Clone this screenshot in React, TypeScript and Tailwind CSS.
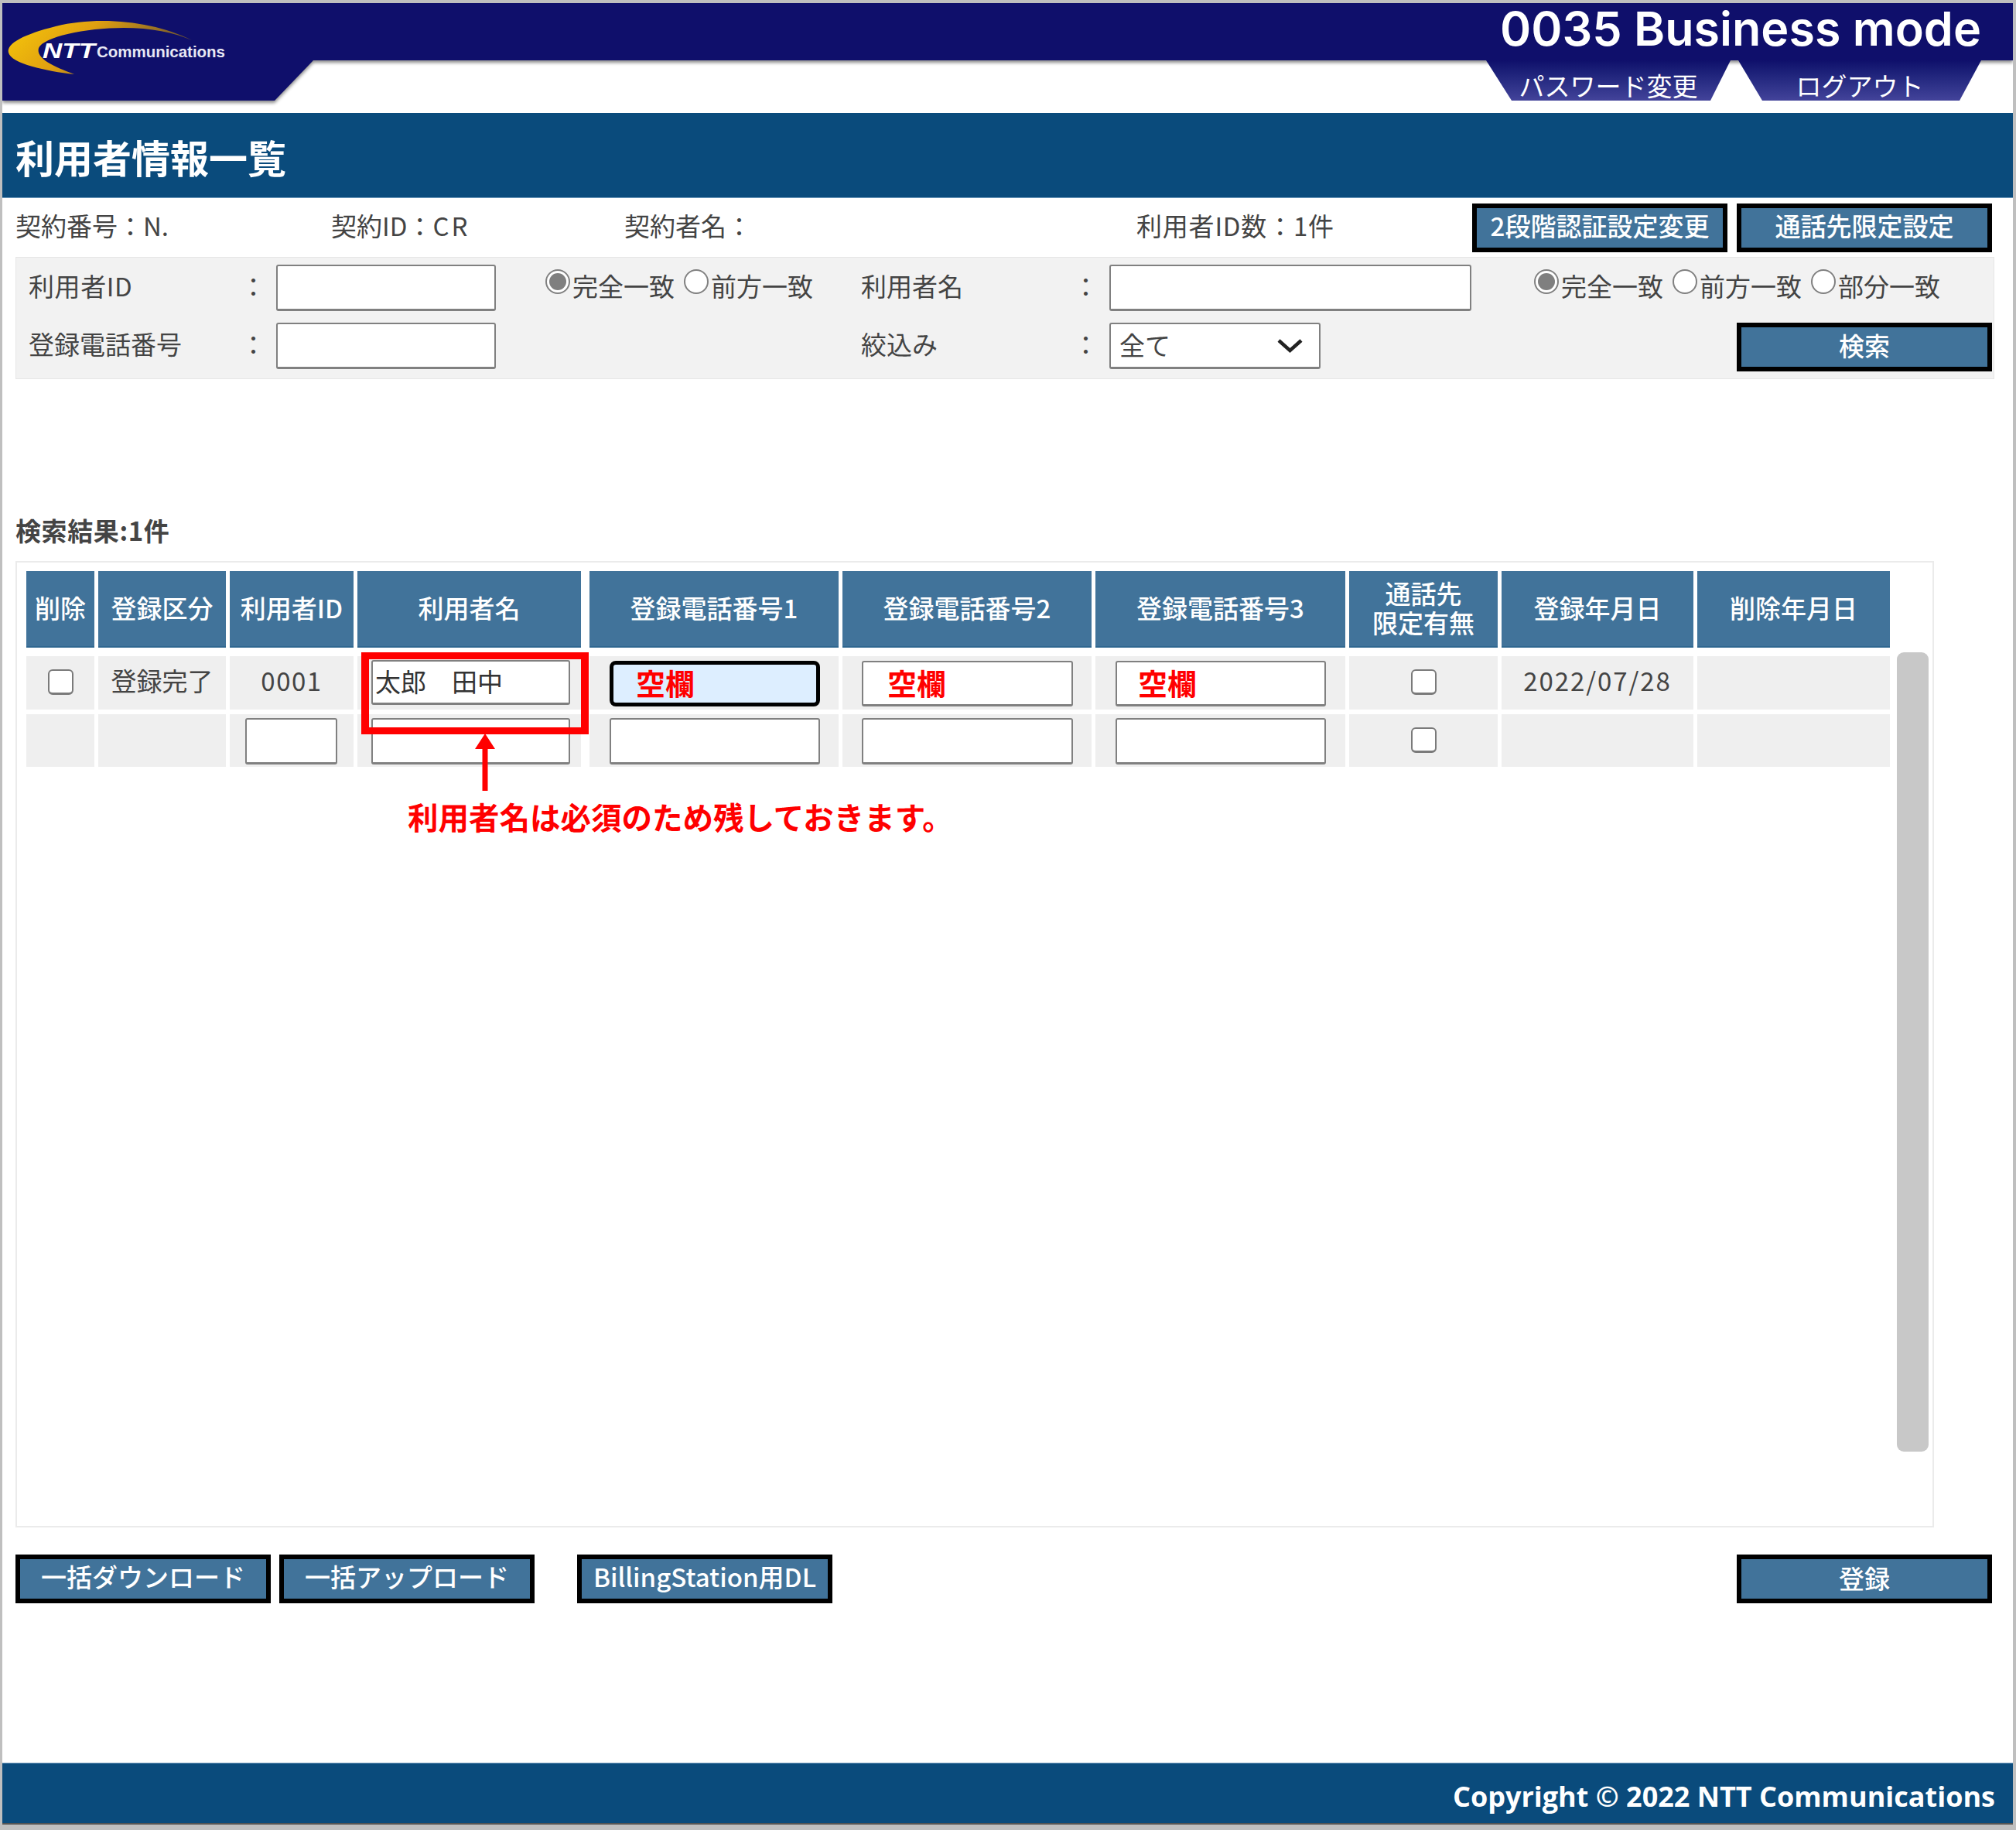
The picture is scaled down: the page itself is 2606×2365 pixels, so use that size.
import React from "react";

const cols = "grid grid-cols-[88px_165px_160px_289px_328px_322px_323px_192px_248px_249px] gap-x-[5px]";

function Btn({ w, children, cls = "pb-[5px]" }: { w: string; children: React.ReactNode; cls?: string }) {
  return (
    <button className={`${w} h-[63px] shrink-0 border-[6px] border-black bg-[#41739a] text-white text-[33px] leading-none font-medium flex items-center justify-center whitespace-nowrap ${cls}`}>
      {children}
    </button>
  );
}

function Radio({ label, checked = false }: { label: string; checked?: boolean }) {
  return (
    <span className="flex items-start mr-[12px]">
      <span className="mt-[6px] w-[32px] h-[32px] rounded-full border-2 border-[#808080] bg-white flex items-center justify-center shrink-0">
        {checked && <span className="w-[22px] h-[22px] rounded-full bg-[#7f7f7f] block" />}
      </span>
      <span className="ml-[3px] mt-[9px] text-[33px] leading-[36px] whitespace-nowrap">{label}</span>
    </span>
  );
}

function Box({ w, h, ml = "", mt = "", children }: { w: string; h: string; ml?: string; mt?: string; children?: React.ReactNode }) {
  return (
    <div className={`${w} ${h} ${ml} ${mt} shrink-0 bg-white border-2 border-b-[3px] border-[#808080] rounded-[3px] flex items-center overflow-hidden`}>
      {children}
    </div>
  );
}

function Blank({ children }: { children: React.ReactNode }) {
  return <span className="text-[#ff0000] font-bold text-[38px] leading-none whitespace-nowrap -mt-[3px] block">{children}</span>;
}

function Check() {
  return <span className="block w-[33px] h-[33px] bg-white border-2 border-b-[3px] border-[#7a7a7a] rounded-[6px] -mt-[2px]" />;
}

function Head({ children, cls = "" }: { children: React.ReactNode; cls?: string }) {
  return (
    <div className={`h-[99px] bg-[#41739a] border-b-2 border-[#2f6790] pb-[3px] text-white text-[33px] leading-[38px] font-medium flex items-center justify-center text-center whitespace-nowrap overflow-hidden ${cls}`}>
      {children}
    </div>
  );
}

function Cell({ children, h, cls = "" }: { children?: React.ReactNode; h: string; cls?: string }) {
  return <div className={`${h} bg-[#efefef] flex ${cls}`}>{children}</div>;
}

export default function App() {
  return (
    <div className="w-[2606px] h-[2365px] bg-white border-l-[3px] border-r-[4px] border-t-[4px] border-b-[7px] border-[#bfbfbf] flex flex-col text-[#444444] [font-family:'Noto_Sans_CJK_JP','Noto_Sans',sans-serif] overflow-hidden">
      {/* header */}
      <header className="relative h-[142px] shrink-0">
        <div className="absolute inset-0 [filter:drop-shadow(0_3px_2px_#8a8a8a)]">
          <div className="h-[126px] bg-[#0f0f6b] [clip-path:polygon(0_0,100%_0,100%_74px,402px_74px,352px_126px,0_126px)]" />
        </div>
        <svg className="absolute left-0 top-0" width="300" height="100" viewBox="3 4 300 100">
          <defs>
            <linearGradient id="g" x1="0" y1="0" x2="1" y2="0.3">
              <stop offset="0" stopColor="#f7c90a" />
              <stop offset="0.45" stopColor="#e0a010" />
              <stop offset="1" stopColor="#6b5230" />
            </linearGradient>
          </defs>
          <path d="M248 52 C200 28 130 20 72 34 C32 44 8 56 11 68 C14 82 60 92 96 96 C70 86 46 76 50 62 C56 48 110 36 160 36 C195 36 225 42 248 52 Z" fill="url(#g)" />
          <text x="55" y="75" fill="#fff" fontFamily="'Liberation Sans',sans-serif" fontWeight="700" fontStyle="italic" fontSize="27" textLength="68" lengthAdjust="spacingAndGlyphs">NTT</text>
          <text x="125" y="74" fill="#e8e8f4" fontFamily="'Liberation Sans',sans-serif" fontWeight="700" fontSize="21" textLength="166" lengthAdjust="spacingAndGlyphs">Communications</text>
        </svg>
        <div className="relative flex justify-end pr-[41px] h-[74px]">
          <span className="text-white text-[61px] leading-[74px] font-semibold font-['Inter',sans-serif] whitespace-nowrap -mt-[4px]">0035 Business mode</span>
        </div>
        <div className="absolute right-[41px] top-[74px] flex gap-[10px]">
          <div className="w-[316px] h-[52px] bg-gradient-to-b from-[#0f0f6b] to-[#43439a] [clip-path:polygon(0_0,100%_0,290px_100%,33px_100%)] flex justify-center text-white text-[33px] leading-[64px] whitespace-nowrap">パスワード変更</div>
          <div className="w-[314px] h-[52px] bg-gradient-to-b from-[#0f0f6b] to-[#43439a] [clip-path:polygon(0_0,100%_0,286px_100%,31px_100%)] flex justify-center text-white text-[33px] leading-[64px] whitespace-nowrap">ログアウト</div>
        </div>
      </header>

      {/* title */}
      <div className="h-[110px] shrink-0 bg-[#0a4b7c] flex items-center pl-[17px] pt-[2px] text-white text-[50px] font-bold leading-none border-b border-[#6f9bbd]">
        利用者情報一覧
      </div>

      {/* info row */}
      <div className="h-[76px] shrink-0 flex items-center pl-[17px] pr-[27px] text-[33px] leading-none whitespace-nowrap">
        <span className="w-[408px] -mt-[5px]">契約番号：N.</span>
        <span className="w-[379px] -mt-[5px]">契約ID：<span className="tracking-[3px]">CR</span></span>
        <span className="w-[662px] -mt-[5px]">契約者名：</span>
        <span className="-mt-[5px] tracking-[0.8px]">利用者ID数：1件</span>
        <div className="ml-auto flex gap-[12px]">
          <Btn w="w-[330px]">2段階認証設定変更</Btn>
          <Btn w="w-[330px]">通話先限定設定</Btn>
        </div>
      </div>

      {/* search panel */}
      <div className="ml-[17px] mr-[24px] h-[158px] shrink-0 bg-[#f2f2f2] border border-[#e6e6e6] pt-[9px] grid grid-cols-[299px_37px_284px_64px_408px_285px_36px_468px_1fr] grid-rows-[60px_60px] gap-y-[15px] text-[33px] leading-none">
        <div className="pl-[16px] pb-[6px] flex items-center tracking-[0.6px]">利用者ID</div>
        <div className="flex items-center -ml-[9px] pb-[6px]">：</div>
        <Box w="w-[284px]" h="h-[60px]" />
        <div />
        <div className="flex"><Radio label="完全一致" checked /><Radio label="前方一致" /></div>
        <div className="flex items-center pb-[6px]">利用者名</div>
        <div className="flex items-center -ml-[11px] pb-[6px]">：</div>
        <Box w="w-[468px]" h="h-[60px]" />
        <div className="pl-[81px] flex"><Radio label="完全一致" checked /><Radio label="前方一致" /><Radio label="部分一致" /></div>

        <div className="pl-[16px] pb-[6px] flex items-center">登録電話番号</div>
        <div className="flex items-center -ml-[9px] pb-[6px]">：</div>
        <Box w="w-[284px]" h="h-[60px]" />
        <div />
        <div />
        <div className="flex items-center pb-[6px]">絞込み</div>
        <div className="flex items-center -ml-[11px] pb-[6px]">：</div>
        <Box w="w-[273px]" h="h-[60px]">
          <span className="ml-[11px] -mt-[3px]">全て</span>
          <svg className="ml-auto mr-[21px]" width="33" height="20" viewBox="0 0 33 20" fill="none" stroke="#222" strokeWidth="4.5"><polyline points="2,3 16.5,16 31,3" /></svg>
        </Box>
        <div className="flex justify-end pr-[2px]"><Btn w="w-[330px]">検索</Btn></div>
      </div>

      {/* result count */}
      <div className="ml-[17px] mt-[172px] h-[50px] mb-[13px] pb-[3px] shrink-0 flex items-center text-[33px] font-bold leading-none tracking-[0.6px]">検索結果:1件</div>

      {/* table panel */}
      <div className="relative ml-[17px] w-[2480px] h-[1249px] shrink-0 border-2 border-[#ebebeb] pl-[12px] pt-[11px] flex">
        <div className="w-[2409px] shrink-0">
          <div className={`${cols} mb-[11px]`}>
            <Head>削除</Head>
            <Head>登録区分</Head>
            <Head>利用者ID</Head>
            <Head>利用者名</Head>
            <Head cls="ml-[6px]">登録電話番号1</Head>
            <Head>登録電話番号2</Head>
            <Head>登録電話番号3</Head>
            <Head>
              <span>通話先<br />限定有無</span>
            </Head>
            <Head>登録年月日</Head>
            <Head>削除年月日</Head>
          </div>
          <div className={`${cols} mb-[6px]`}>
            <Cell h="h-[69px]" cls="items-center justify-center"><Check /></Cell>
            <Cell h="h-[69px]" cls="items-center justify-center text-[33px] leading-none pb-[6px]">登録完了</Cell>
            <Cell h="h-[69px]" cls="items-center justify-center text-[33px] leading-none pb-[6px] tracking-[1.5px]">0001</Cell>
            <Cell h="h-[69px]" cls="items-start">
              <Box w="w-[257px]" h="h-[58px]" ml="ml-[18px]" mt="mt-[5px]">
                <span className="ml-[3px] -mt-[3px] text-[33px] leading-none text-[#333] whitespace-nowrap">太郎　田中</span>
              </Box>
            </Cell>
            <Cell h="h-[69px]" cls="items-start ml-[6px]">
              <div className="ml-[26px] mt-[6px] w-[272px] h-[59px] bg-[#ddeeff] border-[5px] border-black rounded-[8px] flex items-center pl-[29px]"><Blank>空欄</Blank></div>
            </Cell>
            <Cell h="h-[69px]" cls="items-start">
              <Box w="w-[273px]" h="h-[59px]" ml="ml-[25px]" mt="mt-[6px]"><span className="ml-[31px] flex"><Blank>空欄</Blank></span></Box>
            </Cell>
            <Cell h="h-[69px]" cls="items-start">
              <Box w="w-[272px]" h="h-[59px]" ml="ml-[26px]" mt="mt-[6px]"><span className="ml-[27px] flex"><Blank>空欄</Blank></span></Box>
            </Cell>
            <Cell h="h-[69px]" cls="items-center justify-center"><Check /></Cell>
            <Cell h="h-[69px]" cls="items-center justify-center text-[33px] leading-none pb-[6px] tracking-[1.9px]">2022/07/28</Cell>
            <Cell h="h-[69px]" />
          </div>
          <div className={cols}>
            <Cell h="h-[68px]" />
            <Cell h="h-[68px]" />
            <Cell h="h-[68px]" cls="items-start"><Box w="w-[119px]" h="h-[60px]" ml="ml-[20px]" mt="mt-[5px]" /></Cell>
            <Cell h="h-[68px]" cls="items-start"><Box w="w-[257px]" h="h-[60px]" ml="ml-[18px]" mt="mt-[5px]" /></Cell>
            <Cell h="h-[68px]" cls="items-start ml-[6px]"><Box w="w-[272px]" h="h-[60px]" ml="ml-[26px]" mt="mt-[5px]" /></Cell>
            <Cell h="h-[68px]" cls="items-start"><Box w="w-[273px]" h="h-[60px]" ml="ml-[25px]" mt="mt-[5px]" /></Cell>
            <Cell h="h-[68px]" cls="items-start"><Box w="w-[272px]" h="h-[60px]" ml="ml-[26px]" mt="mt-[5px]" /></Cell>
            <Cell h="h-[68px]" cls="items-center justify-center"><Check /></Cell>
            <Cell h="h-[68px]" />
            <Cell h="h-[68px]" />
          </div>
        </div>
        <div className="ml-[9px] mt-[105px] w-[41px] h-[1033px] shrink-0 bg-[#c8c8c8] rounded-[9px]" />

        {/* annotation: red frame, arrow and note lying over the table */}
        <div className="absolute left-[445px] top-[116px] w-[294px] h-[106px] border-x-[10px] border-y-[9px] border-[#ff0000]" />
        <svg className="absolute left-[590px] top-[221px]" width="30" height="74" viewBox="0 0 30 74">
          <path d="M15 0 L28 20 L18.5 20 L18.5 74 L11.5 74 L11.5 20 L2 20 Z" fill="#ff0000" />
        </svg>
        <div className="absolute left-[505px] top-[308px] text-[#ff0000] font-bold text-[39.5px] leading-[40px] whitespace-nowrap">利用者名は必須のため残しておきます。</div>
      </div>

      {/* bottom buttons */}
      <div className="mt-[35px] ml-[17px] mr-[27px] flex shrink-0 gap-[11px]">
        <Btn w="w-[330px]" cls="pb-[7px]">一括ダウンロード</Btn>
        <Btn w="w-[330px]" cls="pb-[7px]">一括アップロード</Btn>
        <Btn w="w-[330px] ml-[44px]" cls="pb-[7px]">BillingStation用DL</Btn>
        <Btn w="w-[330px] ml-auto" cls="pb-[3px]">登録</Btn>
      </div>

      {/* footer */}
      <footer className="mt-auto h-[80px] shrink-0 bg-[#0a4b7c] border-t border-[#6f9bbd] border-b-2 border-b-[#555] pt-[9px] flex items-center justify-end pr-[23px] text-white text-[36px] font-bold leading-none whitespace-nowrap [font-family:'Open_Sans',sans-serif]">
        Copyright © 2022 NTT Communications
      </footer>
    </div>
  );
}
